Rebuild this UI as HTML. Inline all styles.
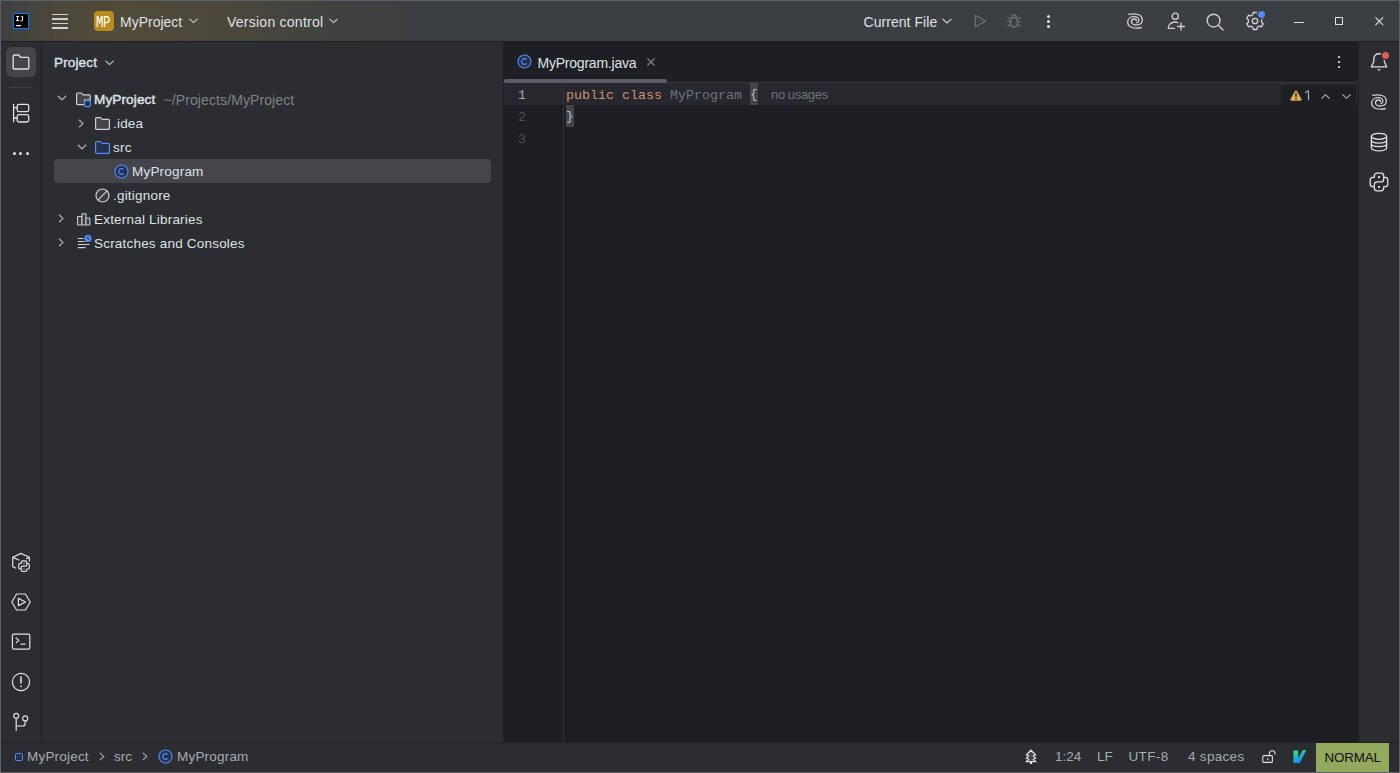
<!DOCTYPE html>
<html><head><meta charset="utf-8">
<style>
*{box-sizing:border-box;margin:0;padding:0}
html,body{width:1400px;height:773px;overflow:hidden;background:#1e1f22;font-family:"Liberation Sans",sans-serif;color:#dfe1e5}
.a{position:absolute}
.t{position:absolute;white-space:pre;line-height:16px}
svg{position:absolute;overflow:visible}
#win{position:absolute;left:0;top:0;width:1400px;height:773px;border:1px solid #5d6068}
#title{left:1px;top:1px;width:1398px;height:40px;background:#3c3f42}
#grad{left:1px;top:1px;width:520px;height:40px;background:linear-gradient(to right,rgba(125,100,35,0.05) 0px,rgba(125,100,35,0.26) 70px,rgba(125,100,35,0.32) 120px,rgba(125,100,35,0.22) 220px,rgba(125,100,35,0.08) 330px,rgba(125,100,35,0) 420px)}
#tline{left:1px;top:41px;width:1398px;height:1px;background:#1e1f22}
#lstrip{left:1px;top:42px;width:40px;height:701px;background:#2b2d30}
#lline{left:41px;top:42px;width:1px;height:701px;background:#1e1f22}
#panel{left:42px;top:42px;width:461px;height:701px;background:#2b2d30}
#editor{left:503px;top:42px;width:856px;height:701px;background:#1e1f22}
#rstrip{left:1359px;top:42px;width:40px;height:701px;background:#2b2d30}
#rline{left:1358px;top:42px;width:1px;height:701px;background:#1e1f22}
#status{left:1px;top:743px;width:1398px;height:29px;background:#2b2d30}
#sline{left:1px;top:742px;width:1398px;height:1px;background:#1e1f22}
</style></head><body>
<div class="a" id="title"></div>
<div class="a" id="grad"></div>
<div class="a" id="tline"></div>
<div class="a" id="lstrip"></div>
<div class="a" id="lline"></div>
<div class="a" id="panel"></div>
<div class="a" id="editor"></div>
<div class="a" id="rline"></div>
<div class="a" id="rstrip"></div>
<div class="a" id="sline"></div>
<div class="a" id="status"></div>
<div id="win"></div>

<!-- TITLE BAR -->
<div class="a" style="left:13px;top:13px;width:16px;height:16px;border:1px solid #087cfa;background:#000"></div>
<svg style="left:13px;top:13px" width="16" height="16" viewBox="0 0 16 16"><path d="M3 3.4H6.2M4.6 3.4V7.6M3 7.6H6.2M8.8 3.4H8.4H9.6V7C9.6 7.6 9.2 8 8.6 8H7.4" fill="none" stroke="#fff" stroke-width="1"/><rect x="3" y="12" width="5" height="1.2" fill="#fff"/></svg>
<div class="a" style="left:52px;top:13.5px;width:16px;height:1.5px;background:#d0d0d0"></div>
<div class="a" style="left:52px;top:18px;width:16px;height:1.5px;background:#d0d0d0"></div>
<div class="a" style="left:52px;top:22.5px;width:16px;height:1.5px;background:#d0d0d0"></div>
<div class="a" style="left:52px;top:27px;width:16px;height:1.5px;background:#d0d0d0"></div>

<div class="a" style="left:94px;top:11px;width:20px;height:20px;border-radius:4px;background:#b98c1f"></div>
<div class="t" style="left:95.5px;top:13px;font-family:'Liberation Mono';font-size:12.5px;color:#fff;transform:scale(0.98,1.3);transform-origin:0 0;letter-spacing:-0.3px">MP</div>
<div class="t" style="left:120px;top:13.5px;font-size:14px">MyProject</div>
<svg style="left:189px;top:18px" width="9" height="6" viewBox="0 0 9 6"><path d="M0.5 0.8L4.5 4.6L8.5 0.8" fill="none" stroke="#cfd1d5" stroke-width="1.1"/></svg>
<div class="t" style="left:227px;top:13.5px;font-size:14px;letter-spacing:0.25px">Version control</div>
<svg style="left:329px;top:18px" width="9" height="6" viewBox="0 0 9 6"><path d="M0.5 0.8L4.5 4.6L8.5 0.8" fill="none" stroke="#cfd1d5" stroke-width="1.1"/></svg>
<div class="t" style="left:863.5px;top:13.5px;font-size:14px;letter-spacing:0.05px">Current File</div>
<svg style="left:942px;top:18px" width="10" height="6" viewBox="0 0 10 6"><path d="M0.5 0.8L5 5L9.5 0.8" fill="none" stroke="#cfd1d5" stroke-width="1.1"/></svg>
<!-- run -->
<svg style="left:974px;top:14px" width="13" height="14" viewBox="0 0 13 14"><path d="M1.2 1.3L11.8 7L1.2 12.7Z" fill="none" stroke="#6f737a" stroke-width="1.2" stroke-linejoin="round"/></svg>
<!-- debug bug -->
<svg style="left:1006px;top:13px" width="16" height="16" viewBox="0 0 16 16" fill="none" stroke="#6f737a" stroke-width="1.2"><path d="M5.5 4.5C5.5 2.8 6.6 1.8 8 1.8S10.5 2.8 10.5 4.5"/><rect x="4.6" y="4.6" width="6.8" height="9.6" rx="3.4"/><path d="M1 8.5H4.6M11.4 8.5H15M1.5 4.5L4.6 6.2M14.5 4.5L11.4 6.2M1.5 13L4.8 11.2M14.5 13L11.2 11.2"/></svg>
<!-- kebab -->
<div class="a" style="left:1046.5px;top:14.5px;width:3px;height:3px;border-radius:50%;background:#dfe1e5"></div>
<div class="a" style="left:1046.5px;top:19.5px;width:3px;height:3px;border-radius:50%;background:#dfe1e5"></div>
<div class="a" style="left:1046.5px;top:24.5px;width:3px;height:3px;border-radius:50%;background:#dfe1e5"></div>
<!-- AI spiral -->
<svg style="left:1125px;top:11px" width="20" height="20" viewBox="0 0 20 20" fill="none" stroke="#ced0d6" stroke-width="1.3" stroke-linecap="butt"><path d="M3.2 3.3C6 2.8 10 2.5 13 3.5C16 4.5 17.5 7 17.3 9.7C17 12.5 14 14 10.5 14C8 14 6.3 12.3 6.5 10.3C6.7 8.7 8 8 9.3 8C10.5 8 11.5 8.8 11.5 10"/><path d="M16.8 16.5C14 17.2 10 17.5 7 16.5C4 15.5 2.5 13 2.7 10.3C3 7.5 6 5.7 9.3 5.7C12 5.7 13.8 7.5 13.8 9.3C13.8 10.8 12.5 11.7 11.3 11.5"/></svg>
<!-- person add -->
<svg style="left:1167px;top:12px" width="19" height="19" viewBox="0 0 19 19" fill="none" stroke="#ced0d6" stroke-width="1.3" stroke-linecap="round"><circle cx="8.2" cy="4.3" r="3.1"/><path d="M1.3 16.3c0-3.6 2.9-6.3 6.6-6.3c1.1 0 2 .2 2.8.6"/><path d="M14 11v7M10.5 14.5h7"/><path d="M1.3 16.3h6"/></svg>
<!-- search -->
<svg style="left:1206px;top:13px" width="18" height="18" viewBox="0 0 18 18" fill="none" stroke="#ced0d6" stroke-width="1.4" stroke-linecap="round"><circle cx="7.6" cy="7.6" r="6.4"/><path d="M12.3 12.3L17 17"/></svg>
<!-- gear -->
<svg style="left:1245px;top:10.8px" width="20" height="20" viewBox="0 0 20 20" fill="none" stroke="#ced0d6" stroke-width="1.3" stroke-linejoin="round"><path d="M7.82 3.67 L8.19 1.49 L11.81 1.49 L12.18 3.67 L14.40 4.94 L16.47 4.18 L18.27 7.31 L16.58 8.72 L16.58 11.28 L18.27 12.69 L16.47 15.82 L14.40 15.06 L12.18 16.33 L11.81 18.51 L8.19 18.51 L7.82 16.33 L5.60 15.06 L3.53 15.82 L1.73 12.69 L3.42 11.28 L3.42 8.72 L1.73 7.31 L3.53 4.18 L5.60 4.94Z"/><circle cx="10" cy="10" r="2.7"/></svg>
<div class="a" style="left:1257.5px;top:10.8px;width:7.6px;height:7.6px;border-radius:50%;background:#548af7;box-shadow:0 0 0 1.6px #3c3f42"></div>
<!-- window controls -->
<div class="a" style="left:1294px;top:21.5px;width:10px;height:1px;background:#dfe1e5"></div>
<div class="a" style="left:1334.6px;top:16.8px;width:8.5px;height:8.2px;border:1.15px solid #dfe1e5"></div>
<svg style="left:1374.6px;top:16.8px" width="8.6" height="8.6" viewBox="0 0 10 10"><path d="M0.5 0.5L9.5 9.5M9.5 0.5L0.5 9.5" stroke="#dfe1e5" stroke-width="1.25"/></svg>


<!-- LEFT STRIP -->
<div class="a" style="left:6px;top:47px;width:30px;height:30px;border-radius:6px;background:#43454a"></div>
<svg style="left:12px;top:54px" width="18" height="16" viewBox="0 0 18 16" fill="none" stroke="#dfe1e5" stroke-width="1.3" stroke-linejoin="round"><path d="M1.2 2.2C1.2 1.6 1.6 1 2.3 1H6.6L8.6 3.3H15.8C16.4 3.3 16.8 3.8 16.8 4.3V14C16.8 14.6 16.4 15 15.8 15H2.2C1.6 15 1.2 14.6 1.2 14Z"/></svg>
<div class="a" style="left:9px;top:87px;width:24px;height:1px;background:#3c3f43"></div>
<svg style="left:12px;top:103px" width="18" height="20" viewBox="0 0 18 20" fill="none" stroke="#dfe1e5" stroke-width="1.3"><path d="M1.6 1V19.2"/><path d="M1.6 4.6H5.2M1.6 15H5.2"/><rect x="5.2" y="1.3" width="11.5" height="7.4" rx="1.8"/><rect x="5.2" y="11.6" width="11.5" height="7.4" rx="1.8"/></svg>
<div class="a" style="left:12.8px;top:151.5px;width:3px;height:3px;border-radius:50%;background:#dfe1e5"></div>
<div class="a" style="left:19.4px;top:151.5px;width:3px;height:3px;border-radius:50%;background:#dfe1e5"></div>
<div class="a" style="left:25.9px;top:151.5px;width:3px;height:3px;border-radius:50%;background:#dfe1e5"></div>

<!-- python packages -->
<svg style="left:8px;top:549px" width="26" height="26" viewBox="0 0 26 26" fill="none" stroke="#dfe1e5" stroke-width="1.2" stroke-linejoin="round"><path d="M8.1 19.2L4.7 17.6V8.3L12.95 4.4L21.4 8.3V12.6"/><path d="M4.9 8.4L11.4 11.2M21.2 8.4L18 9.8"/><g transform="translate(8.2 9.4) scale(0.6)" stroke-width="2"><path d="M11 4.2H15C16.7 4.2 17.7 5.2 17.7 6.9V8.3H19.1C20.8 8.3 21.8 9.3 21.8 11V15C21.8 16.7 20.8 17.7 19.1 17.7H17.7V19.1C17.7 20.8 16.7 21.8 15 21.8H11C9.3 21.8 8.3 20.8 8.3 19.1V17.7H6.9C5.2 17.7 4.2 16.7 4.2 15V11C4.2 9.3 5.2 8.3 6.9 8.3H8.3V6.9C8.3 5.2 9.3 4.2 11 4.2Z" fill="#2b2d30"/><path d="M8.3 17.7V15.6C8.3 13.9 9.3 12.9 11 12.9H15C16.7 12.9 17.7 11.9 17.7 10.2V8.3"/><rect x="11.8" y="6.9" width="2.4" height="2.4" fill="#9a9ca0" stroke="none"/><rect x="11.8" y="16.8" width="2.4" height="2.4" fill="#9a9ca0" stroke="none"/></g></svg>
<!-- services -->
<svg style="left:11px;top:593px" width="20" height="18" viewBox="0 0 20 18" fill="none" stroke="#dfe1e5" stroke-width="1.2" stroke-linejoin="round"><path d="M5.6 1H14.4L19.2 9L14.4 17H5.6L0.8 9Z"/><path d="M7.4 5.4V12.6L14.4 9Z"/></svg>
<!-- terminal -->
<svg style="left:11px;top:633px" width="20" height="17" viewBox="0 0 20 17" fill="none" stroke="#dfe1e5" stroke-width="1.2" stroke-linejoin="round"><rect x="1.4" y="1.2" width="17.4" height="15" rx="1.5"/><path d="M4.8 4.8L7.8 7.4L4.8 10"/><path d="M9.6 11.2H14.6"/></svg>
<!-- problems -->
<svg style="left:11px;top:672px" width="20" height="20" viewBox="0 0 20 20" fill="none" stroke="#dfe1e5" stroke-width="1.2"><circle cx="10" cy="10" r="8.6"/><path d="M10 4.6V11.6" stroke-width="1.6"/><circle cx="10" cy="14.3" r="0.9" fill="#dfe1e5" stroke="none"/></svg>
<!-- git -->
<svg style="left:12px;top:712px" width="18" height="20" viewBox="0 0 18 20" fill="none" stroke="#dfe1e5" stroke-width="1.2"><circle cx="4.2" cy="3.8" r="2.5"/><circle cx="13.2" cy="6.4" r="2.5"/><path d="M4.2 6.3V19"/><path d="M13.2 8.9V11.4C13.2 13.2 12.2 14 10.4 14H4.2"/></svg>

<!-- RIGHT STRIP -->
<svg style="left:1362px;top:45px" width="34" height="30" viewBox="0 0 34 30" fill="none" stroke="#dfe1e5" stroke-width="1.3" stroke-linejoin="round"><path d="M18.9 8.9C14.6 8.1 11.8 10.4 11.8 13.6V16.5L9.3 21.9H24.7L22.3 16.6V15.1"/><path d="M15.1 24.3H18.9L17 25.9Z" fill="#dfe1e5" stroke="none"/></svg>
<div class="a" style="left:1381.8px;top:51.8px;width:7.4px;height:7.4px;border-radius:50%;background:#de5b5b"></div>
<svg style="left:1369px;top:92px" width="20" height="20" viewBox="0 0 20 20" fill="none" stroke="#ced0d6" stroke-width="1.3"><path d="M3.2 3.3C6 2.8 10 2.5 13 3.5C16 4.5 17.5 7 17.3 9.7C17 12.5 14 14 10.5 14C8 14 6.3 12.3 6.5 10.3C6.7 8.7 8 8 9.3 8C10.5 8 11.5 8.8 11.5 10"/><path d="M16.8 16.5C14 17.2 10 17.5 7 16.5C4 15.5 2.5 13 2.7 10.3C3 7.5 6 5.7 9.3 5.7C12 5.7 13.8 7.5 13.8 9.3C13.8 10.8 12.5 11.7 11.3 11.5"/></svg>
<svg style="left:1370px;top:133px" width="18" height="19" viewBox="0 0 18 19" fill="none" stroke="#dfe1e5" stroke-width="1.3"><ellipse cx="9" cy="3.3" rx="7.6" ry="3"/><path d="M1.4 3.3V14.9C1.4 16.5 4.8 17.9 9 17.9S16.6 16.5 16.6 14.9V3.3"/><path d="M1.4 7.3C1.4 8.9 4.8 10.1 9 10.1S16.6 8.9 16.6 7.3M1.4 11C1.4 12.6 4.8 13.6 9 13.6S16.6 12.6 16.6 11"/></svg>
<svg style="left:1366px;top:169px" width="26" height="26" viewBox="0 0 26 26" fill="none" stroke="#dfe1e5" stroke-width="1.3" stroke-linejoin="round"><path d="M11 4.2H15C16.7 4.2 17.7 5.2 17.7 6.9V8.3H19.1C20.8 8.3 21.8 9.3 21.8 11V15C21.8 16.7 20.8 17.7 19.1 17.7H17.7V19.1C17.7 20.8 16.7 21.8 15 21.8H11C9.3 21.8 8.3 20.8 8.3 19.1V17.7H6.9C5.2 17.7 4.2 16.7 4.2 15V11C4.2 9.3 5.2 8.3 6.9 8.3H8.3V6.9C8.3 5.2 9.3 4.2 11 4.2Z"/><path d="M8.3 17.7V15.6C8.3 13.9 9.3 12.9 11 12.9H15C16.7 12.9 17.7 11.9 17.7 10.2V8.3"/><rect x="12" y="7.1" width="2" height="2" fill="#dfe1e5" stroke="none"/><rect x="12" y="17" width="2" height="2" fill="#dfe1e5" stroke="none"/></svg>


<!-- PROJECT PANEL -->
<div class="t" style="left:54px;top:54.5px;font-size:13.6px;-webkit-text-stroke:0.38px #dfe1e5;letter-spacing:0.1px">Project</div>
<svg style="left:104.5px;top:60px" width="9" height="6" viewBox="0 0 9 6"><path d="M0.6 0.8L4.5 4.6L8.4 0.8" fill="none" stroke="#cfd1d5" stroke-width="1.1"/></svg>
<div class="a" style="left:54px;top:159px;width:437px;height:24px;border-radius:4px;background:#43454a"></div>
<!-- row chevrons -->
<svg style="left:57px;top:95px" width="10" height="6" viewBox="0 0 10 6"><path d="M0.8 0.8L5 4.8L9.2 0.8" fill="none" stroke="#a8abb0" stroke-width="1.2"/></svg>
<svg style="left:77.5px;top:118.5px" width="7" height="9" viewBox="0 0 7 9"><path d="M1 0.8L5 4.5L1 8.2" fill="none" stroke="#a8abb0" stroke-width="1.2"/></svg>
<svg style="left:76.5px;top:144px" width="10" height="6" viewBox="0 0 10 6"><path d="M0.8 0.8L5 4.8L9.2 0.8" fill="none" stroke="#a8abb0" stroke-width="1.2"/></svg>
<svg style="left:58px;top:214.3px" width="7" height="9" viewBox="0 0 7 9"><path d="M1 0.8L5 4.5L1 8.2" fill="none" stroke="#a8abb0" stroke-width="1.2"/></svg>
<svg style="left:58px;top:238.3px" width="7" height="9" viewBox="0 0 7 9"><path d="M1 0.8L5 4.5L1 8.2" fill="none" stroke="#a8abb0" stroke-width="1.2"/></svg>
<!-- icons -->
<svg style="left:76px;top:92px" width="16" height="16" viewBox="0 0 16 16" stroke-width="1.2" stroke-linejoin="round"><path d="M0.6 2C0.6 1.4 1 1 1.6 1H5.4L7.2 2.8H13.2C13.8 2.8 14.2 3.2 14.2 3.8V8.2H8.5V12.6H1.6C1 12.6 0.6 12.2 0.6 11.6Z" fill="#43454a" stroke="#ced0d6"/><rect x="8.6" y="8.6" width="5.8" height="6" rx="1.4" fill="#25324d" stroke="#548af7"/></svg>
<svg style="left:94.5px;top:116.5px" width="15" height="13" viewBox="0 0 15 13" stroke-width="1.2" stroke-linejoin="round"><path d="M0.6 1.6C0.6 1 1 0.6 1.6 0.6H5.4L7.2 2.4H13.4C14 2.4 14.4 2.8 14.4 3.4V11.4C14.4 12 14 12.4 13.4 12.4H1.6C1 12.4 0.6 12 0.6 11.4Z" fill="#43454a" stroke="#ced0d6"/></svg>
<svg style="left:94.5px;top:140.5px" width="15" height="13" viewBox="0 0 15 13" stroke-width="1.2" stroke-linejoin="round"><path d="M0.6 1.6C0.6 1 1 0.6 1.6 0.6H5.4L7.2 2.4H13.4C14 2.4 14.4 2.8 14.4 3.4V11.4C14.4 12 14 12.4 13.4 12.4H1.6C1 12.4 0.6 12 0.6 11.4Z" fill="#25324d" stroke="#548af7"/></svg>
<svg style="left:113.5px;top:163.5px" width="15" height="15" viewBox="0 0 15 15"><circle cx="7.5" cy="7.5" r="6.5" fill="#25324d" stroke="#548af7" stroke-width="1.15"/><path d="M9.5 5.6C9.1 5 8.4 4.6 7.6 4.6C6 4.6 4.8 5.9 4.8 7.5S6 10.4 7.6 10.4C8.4 10.4 9.1 10 9.5 9.4" fill="none" stroke="#548af7" stroke-width="1.1"/></svg>
<svg style="left:94.5px;top:188px" width="15" height="15" viewBox="0 0 15 15"><circle cx="7.5" cy="7.5" r="6.5" fill="#3a3c40" stroke="#ced0d6" stroke-width="1.2"/><path d="M2.7 12.3L12.3 2.7" stroke="#ced0d6" stroke-width="1.2"/></svg>
<svg style="left:76.6px;top:212.6px" width="13.4" height="12.6" viewBox="0 0 14 13" stroke="#ced0d6" stroke-width="1.1" fill="#3a3c40"><rect x="0.6" y="3.6" width="4.6" height="8.8" rx="0.6"/><rect x="5.2" y="0.6" width="4.2" height="11.8" rx="0.6"/><rect x="9.4" y="5.2" width="4" height="7.2" rx="0.6"/></svg>
<svg style="left:76.5px;top:234px" width="16" height="15" viewBox="0 0 16 15"><path d="M0.8 4.5H6.5M0.8 7.5H7.5M0.8 10.5H12.5M0.8 13.6H8.5" stroke="#ced0d6" stroke-width="1.2"/><circle cx="11" cy="4.4" r="3.6" fill="#548af7"/><path d="M10.8 2.4V4.8L12.2 5.8" fill="none" stroke="#1e1f22" stroke-width="0.9"/></svg>
<!-- labels -->
<div class="t" style="left:94px;top:92px;font-size:13.6px;-webkit-text-stroke:0.45px #dfe1e5;letter-spacing:0.1px">MyProject</div>
<div class="t" style="left:163.5px;top:92px;font-size:14px;color:#7f8288;letter-spacing:0.1px">~/Projects/MyProject</div>
<div class="t" style="left:113px;top:116px;font-size:13.5px;letter-spacing:0.2px">.idea</div>
<div class="t" style="left:113px;top:140px;font-size:13.5px;letter-spacing:0.2px">src</div>
<div class="t" style="left:132px;top:164px;font-size:13.5px;letter-spacing:0.2px">MyProgram</div>
<div class="t" style="left:113px;top:188px;font-size:13.5px;letter-spacing:0.2px">.gitignore</div>
<div class="t" style="left:94px;top:212px;font-size:13.5px;letter-spacing:0.2px">External Libraries</div>
<div class="t" style="left:94px;top:236px;font-size:13.5px;letter-spacing:0.2px">Scratches and Consoles</div>


<!-- EDITOR -->
<div class="a" style="left:503px;top:82px;width:855px;height:1px;background:#393b40"></div>
<div class="a" style="left:504px;top:79px;width:163px;height:4px;border-radius:2px;background:#5a5d63"></div>
<svg style="left:516.5px;top:54px" width="15" height="15" viewBox="0 0 15 15"><circle cx="7.5" cy="7.5" r="6.5" fill="#25324d" stroke="#548af7" stroke-width="1.15"/><path d="M9.5 5.6C9.1 5 8.4 4.6 7.6 4.6C6 4.6 4.8 5.9 4.8 7.5S6 10.4 7.6 10.4C8.4 10.4 9.1 10 9.5 9.4" fill="none" stroke="#548af7" stroke-width="1.1"/></svg>
<div class="t" style="left:537.5px;top:54.5px;font-size:14px;letter-spacing:-0.22px">MyProgram.java</div>
<svg style="left:647px;top:58px" width="8" height="8" viewBox="0 0 8 8"><path d="M0.4 0.4L7.6 7.6M7.6 0.4L0.4 7.6" stroke="#8c8f94" stroke-width="1.1"/></svg>
<div class="a" style="left:1337.5px;top:56px;width:2.2px;height:2.2px;background:#cfd1d5;border-radius:0.5px"></div>
<div class="a" style="left:1337.5px;top:61px;width:2.2px;height:2.2px;background:#cfd1d5;border-radius:0.5px"></div>
<div class="a" style="left:1337.5px;top:66px;width:2.2px;height:2.2px;background:#cfd1d5;border-radius:0.5px"></div>

<div class="a" style="left:504px;top:83px;width:854px;height:22px;background:#26282e"></div>
<div class="a" style="left:563px;top:83px;width:1px;height:659px;background:#313338"></div>
<div class="a" style="left:750px;top:83px;width:8px;height:22px;background:#43454a"></div>
<div class="a" style="left:566px;top:105px;width:8px;height:22px;background:#43454a"></div>
<div class="t" style="left:518px;top:88px;font-family:'Liberation Mono';font-size:13.33px;line-height:16px;color:#a1a3ab">1</div>
<div class="t" style="left:518px;top:110px;font-family:'Liberation Mono';font-size:13.33px;line-height:16px;color:#4b5059">2</div>
<div class="t" style="left:518px;top:132px;font-family:'Liberation Mono';font-size:13.33px;line-height:16px;color:#4b5059">3</div>
<div class="t" style="left:566px;top:88px;font-family:'Liberation Mono';font-size:13.33px;line-height:16px;color:#bcbec4"><span style="color:#cf8e6d">public class </span><span style="color:#6f737a">MyProgram </span><span style="position:relative;top:-1.5px;font-size:12.5px;display:inline-block;width:8px">{</span></div>
<div class="t" style="left:566px;top:110px;font-family:'Liberation Mono';font-size:13.33px;line-height:16px;color:#bcbec4"><span style="position:relative;top:-1.5px;font-size:12.5px">}</span></div>
<div class="t" style="left:771px;top:87px;font-size:13px;color:#6f737a;letter-spacing:-0.3px;word-spacing:-0.4px">no usages</div>
<!-- inspection widget -->
<div class="a" style="left:1281px;top:85px;width:75px;height:20px;border-radius:5px 5px 0 0;background:#1e1f22"></div>
<svg style="left:1290px;top:90px" width="12" height="11" viewBox="0 0 13 12"><path d="M6.5 0.6C6 0.6 5.6 0.9 5.3 1.4L0.5 9.8C0 10.7 0.6 11.6 1.6 11.6H11.4C12.4 11.6 13 10.7 12.5 9.8L7.7 1.4C7.4 0.9 7 0.6 6.5 0.6Z" fill="#d6ae58"/><path d="M6.5 3.4V7.6" stroke="#1e1f22" stroke-width="1.5"/><rect x="5.75" y="8.8" width="1.5" height="1.5" fill="#1e1f22"/></svg>
<svg style="left:1304px;top:90px" width="7" height="11" viewBox="0 0 7 11"><path d="M4.5 0.6V10.2M1.2 2.8L4.5 0.6" fill="none" stroke="#9eabc2" stroke-width="1.2"/></svg>
<svg style="left:1320.5px;top:93.5px" width="9" height="5" viewBox="0 0 9 5"><path d="M0.5 4.5L4.5 0.7L8.5 4.5" fill="none" stroke="#a8abb0" stroke-width="1.1"/></svg>
<svg style="left:1341.5px;top:93.5px" width="9" height="5" viewBox="0 0 9 5"><path d="M0.5 0.5L4.5 4.3L8.5 0.5" fill="none" stroke="#a8abb0" stroke-width="1.1"/></svg>

<!-- STATUS BAR -->
<div class="a" style="left:15px;top:753px;width:8.2px;height:8.2px;border:1.2px solid #548af7;border-radius:1.5px;background:#25324d"></div>
<div class="t" style="left:27px;top:749px;font-size:13.5px;color:#a8abb0;letter-spacing:0.2px">MyProject</div>
<svg style="left:99px;top:752px" width="6" height="9" viewBox="0 0 6 9"><path d="M0.8 0.8L4.8 4.5L0.8 8.2" fill="none" stroke="#a8abb0" stroke-width="1.1"/></svg>
<div class="t" style="left:114px;top:749px;font-size:13.5px;color:#a8abb0">src</div>
<svg style="left:142px;top:752px" width="6" height="9" viewBox="0 0 6 9"><path d="M0.8 0.8L4.8 4.5L0.8 8.2" fill="none" stroke="#a8abb0" stroke-width="1.1"/></svg>
<svg style="left:157.5px;top:748.5px" width="15" height="15" viewBox="0 0 15 15"><circle cx="7.5" cy="7.5" r="6.5" fill="#25324d" stroke="#548af7" stroke-width="1.15"/><path d="M9.5 5.6C9.1 5 8.4 4.6 7.6 4.6C6 4.6 4.8 5.9 4.8 7.5S6 10.4 7.6 10.4C8.4 10.4 9.1 10 9.5 9.4" fill="none" stroke="#548af7" stroke-width="1.1"/></svg>
<div class="t" style="left:177px;top:749px;font-size:13.5px;color:#a8abb0;letter-spacing:0.2px">MyProgram</div>

<svg style="left:1020px;top:745px" width="25" height="25" viewBox="0 0 25 25" fill="#45474c" stroke="#dfe1e5" stroke-width="1.25" stroke-linejoin="miter"><path d="M11 5.2L15.6 9.8L13.4 10.9L15.6 13.2L13.4 14.4L15.6 16.6H6.4L8.6 14.4L6.4 13.2L8.6 10.9L6.4 9.8Z"/><path d="M11 16.6V19" stroke-width="2.2"/></svg>
<div class="t" style="left:1055px;top:749px;font-size:13.5px;color:#a8abb0">1:24</div>
<div class="t" style="left:1097px;top:749px;font-size:13.5px;color:#a8abb0">LF</div>
<div class="t" style="left:1128.5px;top:749px;font-size:13.5px;color:#a8abb0;letter-spacing:0.35px">UTF-8</div>
<div class="t" style="left:1188px;top:749px;font-size:13.5px;color:#a8abb0;letter-spacing:0.3px">4 spaces</div>
<svg style="left:1262px;top:750px" width="15" height="13" viewBox="0 0 15 13" fill="none" stroke="#dfe1e5" stroke-width="1.1"><rect x="0.8" y="5.6" width="9.6" height="6.8" rx="1"/><path d="M7.4 5.6V3.6C7.4 2 8.6 0.8 10.2 0.8S13 2 13 3.6V4.6"/><rect x="5" y="8.4" width="1.4" height="1.4" fill="#dfe1e5" stroke="none"/></svg>
<svg style="left:1285px;top:745px" width="30" height="25" viewBox="0 0 30 25"><defs><linearGradient id="vg" x1="0" y1="0" x2="0.55" y2="1"><stop offset="0" stop-color="#33ee5c"/><stop offset="0.55" stop-color="#1fb4c8"/><stop offset="1" stop-color="#1d78f6"/></linearGradient></defs><path d="M8.4 5.6H13.2V13.2L17.8 5.1H21.3L14.9 18.1H8.4Z" fill="url(#vg)"/></svg>
<div class="a" style="left:1316px;top:743px;width:73px;height:29px;background:#93a95e"></div>
<div class="t" style="left:1324.5px;top:750px;font-size:13.3px;color:#0e0f10;letter-spacing:-0.1px">NORMAL</div>

</body></html>
